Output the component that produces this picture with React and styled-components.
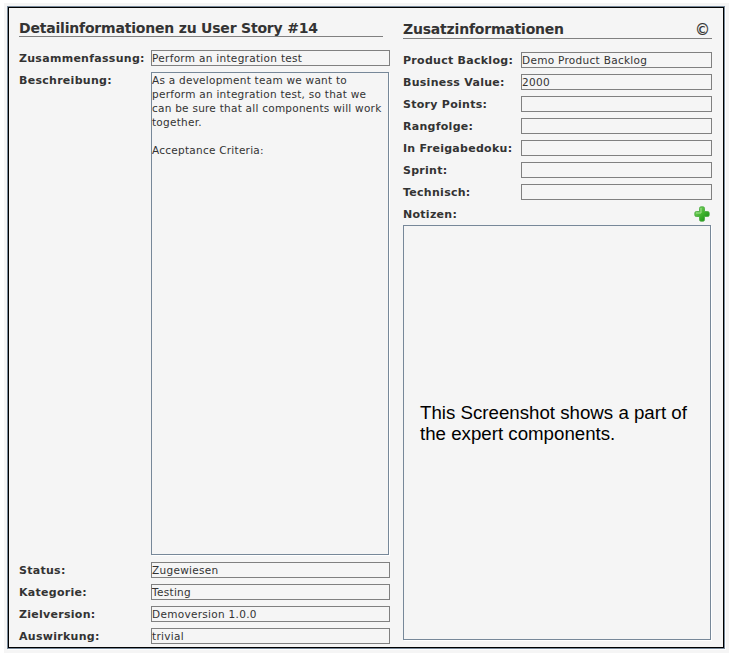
import React from "react";
import styled, { createGlobalStyle } from "styled-components";

const GlobalStyle = createGlobalStyle`
  * { box-sizing: border-box; }
  body { margin: 0; background: #fff; overflow: hidden; }
`;

const Page = styled.main`
  width: 731px;
  height: 656px;
  padding: 3px 2px 3px 4px;
  background: #fff;
  color: #333;
  font-family: Verdana, "DejaVu Sans", sans-serif;
`;

const Backdrop = styled.div`
  height: 650px;
  padding: 3px 4px 4px 3px;
  background: #f5f5f5;
`;

const Frame = styled.div`
  display: flex;
  gap: 13px;
  width: 718px;
  height: 643px;
  padding: 0 0 0 11px;
  border: 1px solid #778899;
  box-shadow: inset 0 0 0 1px #000, 1px 1px 0 #fff;
`;

const Column = styled.section`
  display: flex;
  flex-direction: column;
  width: ${(p) => p.$width}px;
`;

const Heading = styled.header`
  display: flex;
  flex-shrink: 0;
  justify-content: space-between;
  width: ${(p) => p.$width}px;
  height: ${(p) => p.$height}px;
  margin-bottom: ${(p) => p.$gap}px;
  padding-top: ${(p) => p.$top}px;
  border-bottom: 1px solid #808080;
`;

const Title = styled.h1`
  margin: 0;
  font-size: 14px;
  line-height: 18px;
  font-weight: bold;
  letter-spacing: -0.2px;
  white-space: nowrap;
`;

const Copyright = styled.span`
  padding-right: 2px;
  font-size: 15px;
  line-height: 20px;
  -webkit-text-stroke: 0.25px #333;
`;

const Row = styled.div`
  display: grid;
  flex-shrink: 0;
  grid-template-columns: ${(p) => p.$label}px 1fr;
  height: ${(p) => p.$height || 16}px;
  margin-bottom: 6px;
`;

const Label = styled.label`
  padding-top: 1px;
  font-size: 11px;
  line-height: 16px;
  font-weight: bold;
  letter-spacing: 0.28px;
  white-space: nowrap;
`;

const Field = styled.div`
  height: 16px;
  border: 1px solid #808080;
  font-size: 10.5px;
  line-height: 14px;
  letter-spacing: 0.3px;
  white-space: nowrap;
`;

const TextArea = styled.div`
  width: ${(p) => p.$width}px;
  height: ${(p) => p.$height}px;
  border: 1px solid #778899;
  box-shadow: 1px 1px 0 #fff;
  font-size: 10.5px;
  line-height: 14px;
  white-space: nowrap;
`;

const Line = styled.div`
  height: 14px;
  letter-spacing: 0.25px;
`;

const NotesBar = styled.div`
  display: flex;
  justify-content: space-between;
  height: 19px;
  padding-right: 2px;
`;

const Notice = styled.p`
  margin: 176px 0 0 16px;
  color: #000;
  font: 18.7px/21px "Liberation Sans", Arial, sans-serif;
`;

const PlusIcon = () => (
  <svg width="16" height="16" viewBox="0 0 16 16" aria-label="Add">
    <defs>
      <linearGradient id="plus" x1="0" y1="0" x2="1" y2="1">
        <stop offset="0" stopColor="#8cd873" />
        <stop offset=".5" stopColor="#42b52f" />
        <stop offset="1" stopColor="#128414" />
      </linearGradient>
    </defs>
    <path
      d="M7 .8h2q1.500 0 1.500 1.500v3.200h3.200q1.500 0 1.500 1.500v2q0 1.500-1.500 1.500h-3.200v3.200q0 1.500-1.500 1.500H7q-1.500 0-1.500-1.500v-3.200H2.300Q.8 10.500.8 9V7q0-1.500 1.500-1.500h3.200V2.300Q5.500.8 7 .8Z"
      fill="url(#plus)"
      stroke="#45a83b"
      strokeWidth=".8"
    />
    <path d="M7 2.300v4.700H2.300" fill="none" stroke="#a3e38e" strokeLinecap="round" />
  </svg>
);

const description = [
  "As a development team we want to",
  "perform an integration test, so that we",
  "can be sure that all components will work",
  "together.",
  "",
  "Acceptance Criteria:",
];

const states = [
  ["Status:", "Zugewiesen"],
  ["Kategorie:", "Testing"],
  ["Zielversion:", "Demoversion 1.0.0"],
  ["Auswirkung:", "trivial"],
];

const details = [
  ["Product Backlog:", "Demo Product Backlog"],
  ["Business Value:", "2000"],
  ["Story Points:", ""],
  ["Rangfolge:", ""],
  ["In Freigabedoku:", ""],
  ["Sprint:", ""],
  ["Technisch:", ""],
];

export default function App() {
  return (
    <>
      <GlobalStyle />
      <Page>
        <Backdrop>
          <Frame>
            <Column $width={371}>
              <Heading $width={364} $height={30} $top={12} $gap={13}>
                <Title>Detailinformationen zu User Story #14</Title>
              </Heading>
              <Row $label={132}>
                <Label>Zusammenfassung:</Label>
                <Field>Perform an integration test</Field>
              </Row>
              <Row $label={132} $height={484}>
                <Label>Beschreibung:</Label>
                <TextArea $width={238} $height={483}>
                  {description.map((text, i) => (
                    <Line key={i}>{text}</Line>
                  ))}
                </TextArea>
              </Row>
              {states.map(([label, value]) => (
                <Row key={label} $label={132}>
                  <Label>{label}</Label>
                  <Field>{value}</Field>
                </Row>
              ))}
            </Column>
            <Column $width={309}>
              <Heading $width={309} $height={32} $top={13} $gap={13}>
                <Title>Zusatzinformationen</Title>
                <Copyright>©</Copyright>
              </Heading>
              {details.map(([label, value]) => (
                <Row key={label} $label={118}>
                  <Label>{label}</Label>
                  <Field>{value}</Field>
                </Row>
              ))}
              <NotesBar>
                <Label>Notizen:</Label>
                <PlusIcon />
              </NotesBar>
              <TextArea $width={308} $height={415}>
                <Notice>
                  This Screenshot shows a part of
                  <br />
                  the expert components.
                </Notice>
              </TextArea>
            </Column>
          </Frame>
        </Backdrop>
      </Page>
    </>
  );
}
